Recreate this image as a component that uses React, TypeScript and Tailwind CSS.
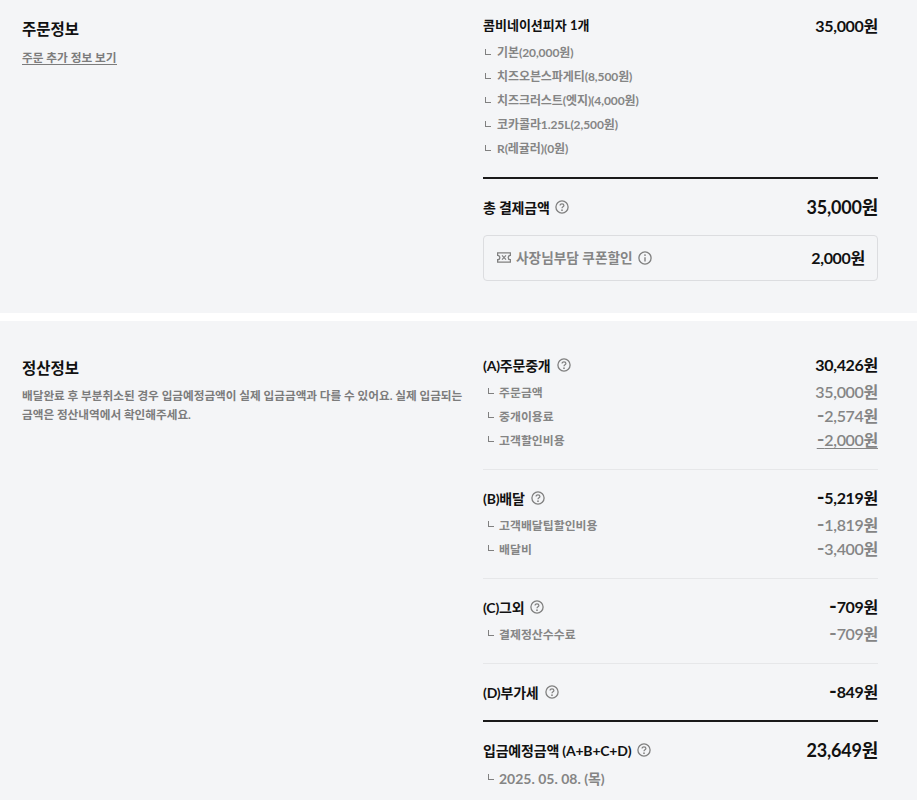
const font = "font-['Lato','Noto_Sans_CJK_KR',sans-serif]";

function Help() {
  return (
    <svg width="14" height="14" viewBox="0 0 14 14" fill="none" className="shrink-0">
      <circle cx="7" cy="7" r="6.1" stroke="#808080" strokeWidth="1.3" />
      <path d="M5.1 5.6c0-1.1.8-1.8 1.9-1.8s1.9.7 1.9 1.6c0 1.4-1.9 1.4-1.9 2.8" stroke="#808080" strokeWidth="1.25" fill="none" />
      <circle cx="7" cy="10.2" r=".85" fill="#808080" />
    </svg>
  );
}

function Info() {
  return (
    <svg width="14" height="14" viewBox="0 0 14 14" fill="none" className="shrink-0">
      <circle cx="7" cy="7" r="6.1" stroke="#808080" strokeWidth="1.3" />
      <path d="M7 6.2v4.2" stroke="#808080" strokeWidth="1.4" />
      <circle cx="7" cy="4.1" r=".9" fill="#808080" />
    </svg>
  );
}

function Ticket() {
  return (
    <svg width="14" height="11" viewBox="0 0 14 11" fill="none" className="shrink-0">
      <path d="M.6.8h12.8v2.5a2.2 2.2 0 0 0 0 4.4v2.5H.6V7.7a2.2 2.2 0 0 0 0-4.4z" stroke="#808080" strokeWidth="1.3" />
      <path d="M5 3.4l4 4.2M9 3.4l-4 4.2" stroke="#808080" strokeWidth="1.2" />
    </svg>
  );
}

function Corner() {
  return <span className="inline-block w-[6px] h-[6px] border-l border-b border-[#808080] shrink-0 mb-[3px]" />;
}

function Money({ value }: { value: string }) {
  const neg = value.startsWith("-");
  return (
    <>
      {neg && <span className="text-[21px] leading-[0]">-</span>}
      {neg ? value.slice(1) : value}
    </>
  );
}

function OptionRow({ label }: { label: string }) {
  return (
    <div className="h-6 flex items-center gap-[6px] pl-[2px] text-[12px] font-bold text-[#858585] tracking-[-0.08px]">
      <Corner />
      <span>{label}</span>
    </div>
  );
}

function SubRow({ label, value, underline = false }: { label: string; value: string; underline?: boolean }) {
  return (
    <div className="h-6 flex items-center justify-between">
      <div className="flex items-center gap-[5px] pl-[5px] pt-[2px] text-[11.9px] font-bold text-[#858585]">
        <Corner />
        <span>{label}</span>
      </div>
      <span className={`h-6 leading-6 text-[16px] font-semibold text-[#858585] tracking-[-0.3px] ${underline ? "underline underline-offset-2 decoration-1" : ""}`}>
        <Money value={value} />
      </span>
    </div>
  );
}

function Head({ label, value }: { label: string; value: string }) {
  return (
    <div className="h-[30px] flex items-center justify-between text-[#111]">
      <div className="flex items-center gap-[6px] text-[14px] font-bold tracking-[-0.2px]">
        <span>{label}</span>
        <Help />
      </div>
      <span className="h-[30px] leading-[30px] text-[16px] font-bold tracking-[-0.3px]">
        <Money value={value} />
      </span>
    </div>
  );
}

export default function App() {
  return (
    <div className={`w-[917px] h-[800px] overflow-hidden bg-white ${font}`}>
      <section className="h-[313px] bg-[#f4f5f7] flex pl-[22px] pr-[39px]">
        <div className="w-[461px] shrink-0 pt-[18px]">
          <h2 className="text-[15.5px] leading-[22px] font-bold text-[#111]">주문정보</h2>
          <a className="inline-block mt-[10px] text-[11.7px] leading-[14px] font-bold text-[#7c7c7c] border-b border-[#7c7c7c]">주문 추가 정보 보기</a>
        </div>
        <div className="flex-1 pt-[14px]">
          <div className="h-6 flex items-center justify-between text-[#111]">
            <span className="text-[13px] font-bold">콤비네이션피자 1개</span>
            <span className="text-[16px] font-bold tracking-[-0.3px]">35,000원</span>
          </div>
          <div className="mt-[3px]">
            <OptionRow label="기본(20,000원)" />
            <OptionRow label="치즈오븐스파게티(8,500원)" />
            <OptionRow label="치즈크러스트(엣지)(4,000원)" />
            <OptionRow label="코카콜라1.25L(2,500원)" />
            <OptionRow label="R(레귤러)(0원)" />
          </div>
          <div className="mt-[16px] h-[2px] bg-[#1a1a1a]" />
          <div className="h-[56px] flex items-center justify-between text-[#111]">
            <div className="flex items-center gap-[5px] text-[14px] font-bold tracking-[-0.2px]">
              <span>총 결제금액</span>
              <Help />
            </div>
            <span className="text-[18px] font-bold tracking-[-0.2px]">35,000원</span>
          </div>
          <div className="h-[46px] border border-[#dcdde0] rounded-[4px] flex items-center justify-between pl-[13px] pr-[12px]">
            <div className="flex items-center gap-[5px] text-[13.7px] font-bold text-[#858585]">
              <Ticket />
              <span>사장님부담 쿠폰할인</span>
              <Info />
            </div>
            <span className="text-[16px] font-bold text-[#111] tracking-[-0.3px]">2,000원</span>
          </div>
        </div>
      </section>
      <section className="mt-[8px] h-[479px] bg-[#f4f5f7] flex pl-[22px] pr-[39px]">
        <div className="w-[461px] shrink-0 pt-[36px]">
          <h2 className="text-[15.5px] leading-[22px] font-bold text-[#111]">정산정보</h2>
          <p className="mt-[7px] w-[445px] text-[11.63px] leading-[19px] font-bold text-[#7c7c7c]">
            배달완료 후 부분취소된 경우 입금예정금액이 실제 입금금액과 다를 수 있어요. 실제 입금되는 금액은 정산내역에서 확인해주세요.
          </p>
        </div>
        <div className="flex-1 pt-[29px]">
          <Head label="(A)주문중개" value="30,426원" />
          <SubRow label="주문금액" value="35,000원" />
          <SubRow label="중개이용료" value="-2,574원" />
          <SubRow label="고객할인비용" value="-2,000원" underline />
          <div className="mt-[17px] mb-[13px] h-px bg-[#e6e7e9]" />
          <Head label="(B)배달" value="-5,219원" />
          <SubRow label="고객배달팁할인비용" value="-1,819원" />
          <SubRow label="배달비" value="-3,400원" />
          <div className="mt-[17px] mb-[13px] h-px bg-[#e6e7e9]" />
          <Head label="(C)그외" value="-709원" />
          <SubRow label="결제정산수수료" value="-709원" />
          <div className="mt-[17px] mb-[13px] h-px bg-[#e6e7e9]" />
          <Head label="(D)부가세" value="-849원" />
          <div className="mt-[13px] h-[2px] bg-[#1a1a1a]" />
          <div className="mt-[8px] h-[40px] flex items-center justify-between text-[#111]">
            <div className="flex items-center gap-[6px] text-[14px] font-bold tracking-[-0.2px]">
              <span>입금예정금액 (A+B+C+D)</span>
              <Help />
            </div>
            <span className="text-[18px] font-bold tracking-[-0.2px]">23,649원</span>
          </div>
          <div className="h-4 flex items-center gap-[5px] pl-[5px] text-[14px] font-bold text-[#858585]">
            <Corner />
            <span>2025. 05. 08. (목)</span>
          </div>
        </div>
      </section>
    </div>
  );
}
